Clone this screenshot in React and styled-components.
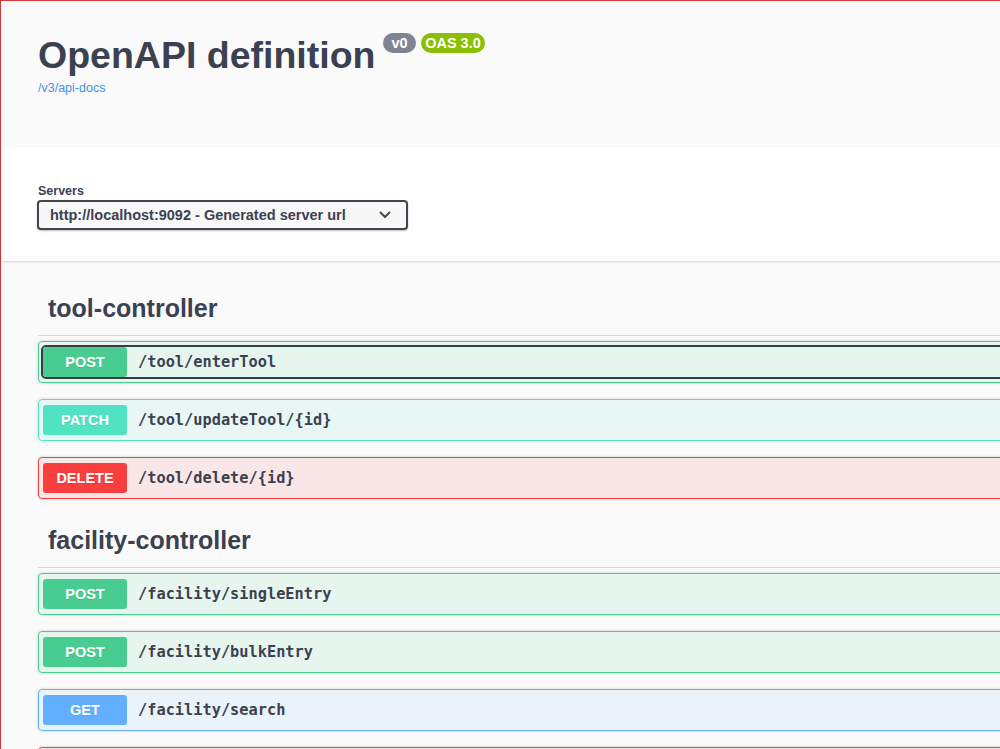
import React from "react";
import styled, { createGlobalStyle, css } from "styled-components";

const GlobalStyle = createGlobalStyle`
  *, *::before, *::after { box-sizing: border-box; }
  html, body {
    margin: 0;
    padding: 0;
    overflow: hidden;
    background: #fafafa;
  }
  body {
    font-family: "Liberation Sans", Arial, sans-serif;
    color: #3b4151;
  }
`;

const methodColors = {
  POST: "#49cc90",
  PATCH: "#50e3c2",
  DELETE: "#f93e3e",
  GET: "#61affe",
};

const tint = {
  POST: "rgba(73, 204, 144, 0.1)",
  PATCH: "rgba(80, 227, 194, 0.1)",
  DELETE: "rgba(249, 62, 62, 0.1)",
  GET: "rgba(97, 175, 254, 0.1)",
};

const Page = styled.div`
  width: 1400px;
  min-height: 760px;
  border-top: 1px solid #d8383b;
  border-left: 1px solid #d8383b;
  background: #fafafa;
`;

const Info = styled.header`
  height: 146px;
  padding: 33px 0 0 37px;
  background: #fafafa;
`;

const TitleRow = styled.div`
  display: flex;
  align-items: flex-start;
`;

const Title = styled.h1`
  margin: 0;
  font-size: 37.5px;
  line-height: 43px;
  font-weight: 700;
  color: #3b4151;
`;

const Badges = styled.div`
  display: flex;
  gap: 5px;
  margin: -1px 0 0 8px;
`;

const Badge = styled.span`
  display: inline-block;
  height: 20px;
  padding: 0 ${(p) => p.$pad}px;
  border-radius: 57px;
  background: ${(p) => p.$bg};
  color: #fff;
  font-size: 14.5px;
  font-weight: 700;
  line-height: 20px;
`;

const DocsLink = styled.a`
  display: inline-block;
  margin-top: 4px;
  font-size: 12.5px;
  line-height: 15px;
  color: #4990e2;
  text-decoration: none;
`;

const SchemeContainer = styled.section`
  height: 114px;
  padding: 30px 37px;
  background: #fff;
  box-shadow: 0 1px 2px 0 rgba(0, 0, 0, 0.15);
  position: relative;
`;

const ServersLabel = styled.div`
  padding-top: 7px;
  margin-bottom: 1px;
  font-size: 12.5px;
  line-height: 15px;
  font-weight: 700;
  color: #3b4151;
`;

const Select = styled.div`
  width: 371px;
  height: 30px;
  margin-left: -1px;
  padding: 0 15px 0 11px;
  display: flex;
  align-items: center;
  justify-content: space-between;
  border: 2px solid #41444e;
  border-radius: 4px;
  background: #f7f7f7;
  box-shadow: 0 1px 2px 0 rgba(0, 0, 0, 0.25);
  font-size: 14.5px;
  font-weight: 700;
  color: #3b4151;
`;

const Operations = styled.main`
  padding: 21px 0 0 37px;
`;

const TagSection = styled.section`
  display: flex;
  flex-direction: column;
  margin-bottom: 15px;
`;

const TagHeading = styled.h3`
  margin: 0 0 5px;
  padding: 10px 20px 10px 10px;
  font-size: 25px;
  line-height: 33px;
  font-weight: 700;
  color: #3b4151;
  border-bottom: 1px solid rgba(59, 65, 81, 0.2);
`;

const Opblock = styled.div`
  height: 42px;
  margin-bottom: 16px;
  padding: 5px 4px;
  border: 1px solid ${(p) => methodColors[p.$method]};
  border-radius: 4px;
  background: ${(p) => tint[p.$method]};
  box-shadow: 0 0 3px rgba(0, 0, 0, 0.19);
  &:last-child {
    margin-bottom: 0;
  }
`;

const Summary = styled.div`
  display: flex;
  align-items: center;
  height: 30px;
  border-radius: 3px;
  ${(p) =>
    p.$focused &&
    css`
      box-shadow: 0 0 0 2px #383b45;
    `}
`;

const Method = styled.span`
  width: 84px;
  height: 30px;
  flex-shrink: 0;
  border-radius: 3px;
  background: ${(p) => methodColors[p.$method]};
  color: #fff;
  font-size: 14.5px;
  font-weight: 700;
  line-height: 30px;
  text-align: center;
  text-shadow: 0 1px 0 rgba(0, 0, 0, 0.1);
`;

const Path = styled.span`
  margin-left: 11px;
  font-family: "DejaVu Sans Mono", "Liberation Mono", monospace;
  font-size: 15.3px;
  font-weight: 600;
  color: #3b4151;
`;

const Chevron = () => (
  <svg width="12" height="8" viewBox="0 0 12 8" fill="none">
    <polyline
      points="1.5,1.5 6,6 10.5,1.5"
      stroke="#3b4151"
      strokeWidth="1.8"
      strokeLinecap="round"
      strokeLinejoin="round"
    />
  </svg>
);

// the last block only peeks in at the bottom edge, so it carries no text
const tags = [
  {
    name: "tool-controller",
    ops: [
      { method: "POST", path: "/tool/enterTool", focused: true },
      { method: "PATCH", path: "/tool/updateTool/{id}" },
      { method: "DELETE", path: "/tool/delete/{id}" },
    ],
  },
  {
    name: "facility-controller",
    ops: [
      { method: "POST", path: "/facility/singleEntry" },
      { method: "POST", path: "/facility/bulkEntry" },
      { method: "GET", path: "/facility/search" },
      { method: "DELETE", path: "", peek: true },
    ],
  },
];

const App = () => {
  return (
    <Page>
      <GlobalStyle />
      <Info>
        <TitleRow>
          <Title>OpenAPI definition</Title>
          <Badges>
            <Badge $bg="#7d8492" $pad={8}>v0</Badge>
            <Badge $bg="#89bf04" $pad={4.5}>OAS 3.0</Badge>
          </Badges>
        </TitleRow>
        <DocsLink href="#">/v3/api-docs</DocsLink>
      </Info>

      <SchemeContainer>
        <ServersLabel>Servers</ServersLabel>
        <Select>
          <span>http://localhost:9092 - Generated server url</span>
          <Chevron />
        </Select>
      </SchemeContainer>

      <Operations>
        {tags.map((tag) => (
          <TagSection key={tag.name}>
            <TagHeading>{tag.name}</TagHeading>
            {tag.ops.map((op, i) => (
              <Opblock key={i} $method={op.method}>
                <Summary $focused={op.focused}>
                  <Method $method={op.method}>{op.peek ? "" : op.method}</Method>
                  <Path>{op.path}</Path>
                </Summary>
              </Opblock>
            ))}
          </TagSection>
        ))}
      </Operations>
    </Page>
  );
};

export default App;
